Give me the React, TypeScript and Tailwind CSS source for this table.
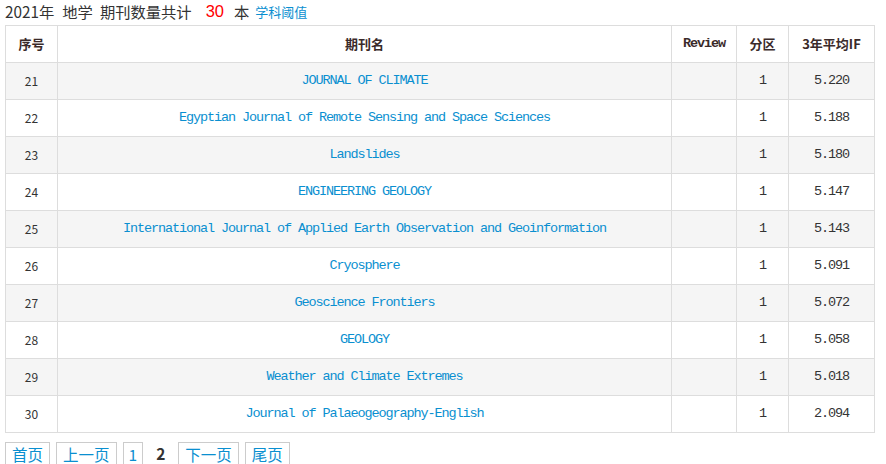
const rows = [
  { no: 21, name: "JOURNAL OF CLIMATE", zone: 1, impact: "5.220" },
  { no: 22, name: "Egyptian Journal of Remote Sensing and Space Sciences", zone: 1, impact: "5.188" },
  { no: 23, name: "Landslides", zone: 1, impact: "5.180" },
  { no: 24, name: "ENGINEERING GEOLOGY", zone: 1, impact: "5.147" },
  { no: 25, name: "International Journal of Applied Earth Observation and Geoinformation", zone: 1, impact: "5.143" },
  { no: 26, name: "Cryosphere", zone: 1, impact: "5.091" },
  { no: 27, name: "Geoscience Frontiers", zone: 1, impact: "5.072" },
  { no: 28, name: "GEOLOGY", zone: 1, impact: "5.058" },
  { no: 29, name: "Weather and Climate Extremes", zone: 1, impact: "5.018" },
  { no: 30, name: "Journal of Palaeogeography-English", zone: 1, impact: "2.094" },
];

const mono = "font-['Liberation_Mono','Noto_Sans_CJK_SC',monospace] text-[13.5px] tracking-[-1.1px]";

export default function App() {
  return (
    <div className="w-[886px] h-[464px] overflow-hidden bg-white pl-[5px] font-['Noto_Sans_CJK_SC',sans-serif] text-[#333]">
      {/* Title */}
      <div className="h-[25px] flex items-center text-[15.3px] leading-none pb-[2px]">
        <span>2021年</span>
        <span className="ml-[8px]">地学</span>
        <span className="ml-[7px]">期刊数量共计</span>
        <span className="ml-[14px] font-['Liberation_Sans',sans-serif] text-[16.5px] text-[#ff0000]">30</span>
        <span className="ml-[10px]">本</span>
        <a href="#" className="ml-[6px] text-[13px] text-[#0a8fd0]">学科阈值</a>
      </div>

      {/* Table */}
      <table className="w-[870px] border-collapse border border-[#ddd] text-[12px]">
        <thead>
          <tr className="h-[37px]">
            <th className="w-[52px] border border-[#ddd] text-[13px] font-bold text-[#3a2a2a]">序号</th>
            <th className="w-[614px] border border-[#ddd] text-[13px] font-bold text-[#3a2a2a]">期刊名</th>
            <th className={`w-[65px] border border-[#ddd] font-bold text-[#3a2a2a] ${mono}`}>Review</th>
            <th className="w-[52px] border border-[#ddd] text-[13px] font-bold text-[#3a2a2a]">分区</th>
            <th className="border border-[#ddd] text-[13px] font-bold text-[#3a2a2a]">3年平均IF</th>
          </tr>
        </thead>
        <tbody>
          {rows.map((r, i) => (
            <tr key={r.no} className={`h-[37px] ${i % 2 === 0 ? "bg-[#f5f5f5]" : "bg-white"}`}>
              <td className="border border-[#ddd] text-center text-[12px] text-[#333]">{r.no}</td>
              <td className={`border border-[#ddd] text-center text-[#0a8fd0] ${mono}`}>
                <a href="#">{r.name}</a>
              </td>
              <td className="border border-[#ddd]"></td>
              <td className={`border border-[#ddd] text-center text-[#333] ${mono}`}>{r.zone}</td>
              <td className={`border border-[#ddd] text-center text-[#333] ${mono}`}>{r.impact}</td>
            </tr>
          ))}
        </tbody>
      </table>

      {/* Pagination */}
      <div className="mt-[9px] flex items-start gap-[6px] text-[15.5px] leading-[22px]">
        <a href="#" className="border border-[#ccc] px-[6px] text-[#0a8fd0]">首页</a>
        <a href="#" className="border border-[#ccc] px-[6px] text-[#0a8fd0]">上一页</a>
        <a href="#" className="border border-[#ccc] px-[5px] text-[#0a8fd0]">1</a>
        <span className="px-[7px] font-bold text-[#333]">2</span>
        <a href="#" className="border border-[#ccc] px-[6px] text-[#0a8fd0]">下一页</a>
        <a href="#" className="border border-[#ccc] px-[6px] text-[#0a8fd0]">尾页</a>
      </div>
    </div>
  );
}
